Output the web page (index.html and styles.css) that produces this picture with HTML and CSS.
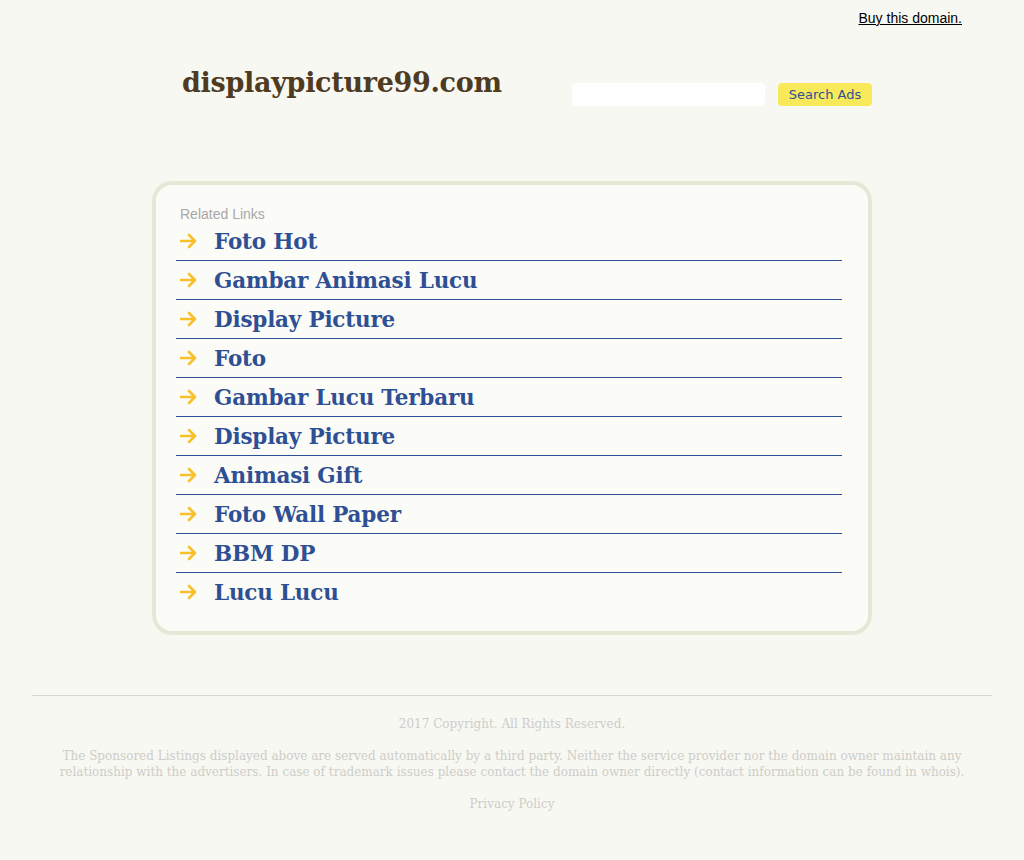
FILE: index.html
```html
<!DOCTYPE html>
<html lang="en">
<head>
<meta charset="utf-8">
<title>displaypicture99.com</title>
<link rel="stylesheet" href="styles.css">
</head>
<body>
<div class="topbar"><a class="buy" href="#">Buy this domain.</a></div>
<div class="wrap">
  <header class="header">
    <h1 class="site">displaypicture99.com</h1>
    <form class="search">
      <input class="search-input" type="text" aria-label="Search">
      <button class="search-btn" type="button">Search Ads</button>
    </form>
  </header>

  <section class="box">
    <div class="box-title">Related Links</div>
    <ul class="links">
      <li><span class="arrow"><svg viewBox="0 0 18 16" width="18" height="16"><path d="M1 8h14M9 2l6 6-6 6" fill="none" stroke="#f6c12b" stroke-width="2.6" stroke-linecap="round" stroke-linejoin="round"/></svg></span><a href="#">Foto Hot</a></li>
      <li><span class="arrow"><svg viewBox="0 0 18 16" width="18" height="16"><path d="M1 8h14M9 2l6 6-6 6" fill="none" stroke="#f6c12b" stroke-width="2.6" stroke-linecap="round" stroke-linejoin="round"/></svg></span><a href="#">Gambar Animasi Lucu</a></li>
      <li><span class="arrow"><svg viewBox="0 0 18 16" width="18" height="16"><path d="M1 8h14M9 2l6 6-6 6" fill="none" stroke="#f6c12b" stroke-width="2.6" stroke-linecap="round" stroke-linejoin="round"/></svg></span><a href="#">Display Picture</a></li>
      <li><span class="arrow"><svg viewBox="0 0 18 16" width="18" height="16"><path d="M1 8h14M9 2l6 6-6 6" fill="none" stroke="#f6c12b" stroke-width="2.6" stroke-linecap="round" stroke-linejoin="round"/></svg></span><a href="#">Foto</a></li>
      <li><span class="arrow"><svg viewBox="0 0 18 16" width="18" height="16"><path d="M1 8h14M9 2l6 6-6 6" fill="none" stroke="#f6c12b" stroke-width="2.6" stroke-linecap="round" stroke-linejoin="round"/></svg></span><a href="#">Gambar Lucu Terbaru</a></li>
      <li><span class="arrow"><svg viewBox="0 0 18 16" width="18" height="16"><path d="M1 8h14M9 2l6 6-6 6" fill="none" stroke="#f6c12b" stroke-width="2.6" stroke-linecap="round" stroke-linejoin="round"/></svg></span><a href="#">Display Picture</a></li>
      <li><span class="arrow"><svg viewBox="0 0 18 16" width="18" height="16"><path d="M1 8h14M9 2l6 6-6 6" fill="none" stroke="#f6c12b" stroke-width="2.6" stroke-linecap="round" stroke-linejoin="round"/></svg></span><a href="#">Animasi Gift</a></li>
      <li><span class="arrow"><svg viewBox="0 0 18 16" width="18" height="16"><path d="M1 8h14M9 2l6 6-6 6" fill="none" stroke="#f6c12b" stroke-width="2.6" stroke-linecap="round" stroke-linejoin="round"/></svg></span><a href="#">Foto Wall Paper</a></li>
      <li><span class="arrow"><svg viewBox="0 0 18 16" width="18" height="16"><path d="M1 8h14M9 2l6 6-6 6" fill="none" stroke="#f6c12b" stroke-width="2.6" stroke-linecap="round" stroke-linejoin="round"/></svg></span><a href="#">BBM DP</a></li>
      <li><span class="arrow"><svg viewBox="0 0 18 16" width="18" height="16"><path d="M1 8h14M9 2l6 6-6 6" fill="none" stroke="#f6c12b" stroke-width="2.6" stroke-linecap="round" stroke-linejoin="round"/></svg></span><a href="#">Lucu Lucu</a></li>
    </ul>
  </section>
</div>

<footer class="footer">
  <p class="copy">2017 Copyright. All Rights Reserved.</p>
  <p class="disclaimer">The Sponsored Listings displayed above are served automatically by a third party. Neither the service provider nor the domain owner maintain any relationship with the advertisers. In case of trademark issues please contact the domain owner directly (contact information can be found in whois).</p>
  <p class="privacy"><a href="#">Privacy Policy</a></p>
</footer>
</body>
</html>
```

FILE: styles.css
```css
html, body {
  margin: 0;
  padding: 0;
}

body {
  background: #f8f8f3;
  font-family: "DejaVu Serif", "Liberation Serif", serif;
}

.topbar {
  display: flex;
  justify-content: flex-end;
  padding: 10px 62px 0 0;
  height: 19px;
}

.buy {
  font-family: "Liberation Sans", Arial, sans-serif;
  font-size: 14px;
  color: #000;
  text-decoration: underline;
}

.wrap {
  width: 720px;
  margin: 0 auto;
}

.header {
  display: flex;
  justify-content: space-between;
  align-items: flex-start;
  padding: 29px 0 0 30px;
  height: 124px;
  box-sizing: border-box;
}

.site {
  margin: 0;
  font-family: "DejaVu Serif", serif;
  font-weight: bold;
  font-size: 27px;
  line-height: 50px;
  color: #4f3b1f;
  letter-spacing: -0.3px;
}

.search {
  display: flex;
  align-items: center;
  gap: 13px;
  margin-top: 24px;
}

.search-input {
  width: 193px;
  height: 23px;
  box-sizing: border-box;
  border: none;
  border-radius: 4px;
  background: #fff;
  padding: 0 6px;
}

.search-btn {
  width: 94px;
  height: 23px;
  border: none;
  border-radius: 4px;
  background: #f8e95b;
  color: #2f4f94;
  font-family: "DejaVu Sans", sans-serif;
  font-size: 13px;
  padding: 0;
  margin-top: 1px;
}

.box {
  margin-top: 28px;
  border: 4px solid #e6e8d6;
  border-radius: 20px;
  background: #fbfbf7;
  padding: 21px 26px 20px 20px;
}

.box-title {
  font-family: "Liberation Sans", Arial, sans-serif;
  font-size: 14px;
  color: #a8a8a8;
  padding-left: 4px;
  line-height: 16px;
}

.links {
  list-style: none;
  margin: 0;
  padding: 0;
}

.links li {
  display: flex;
  align-items: center;
  height: 38px;
  border-bottom: 1px solid #2d4f95;
}

.links li:last-child {
  border-bottom: none;
}

.arrow {
  width: 34px;
  padding-left: 4px;
  display: flex;
  align-items: center;
}

.links a {
  font-family: "DejaVu Serif", serif;
  font-weight: bold;
  font-size: 21.5px;
  color: #2f4f94;
  text-decoration: none;
  letter-spacing: -0.2px;
}

.footer {
  margin: 60px 32px 0;
  border-top: 1px solid #d8d8d3;
  text-align: center;
  color: #cdcdc8;
  font-family: "DejaVu Serif", serif;
  font-size: 12px;
  line-height: 16px;
  padding: 12px 20px 40px;
}

.footer p {
  margin: 8px 0 16px;
}

.footer a {
  color: #cdcdc8;
  text-decoration: none;
}
```
